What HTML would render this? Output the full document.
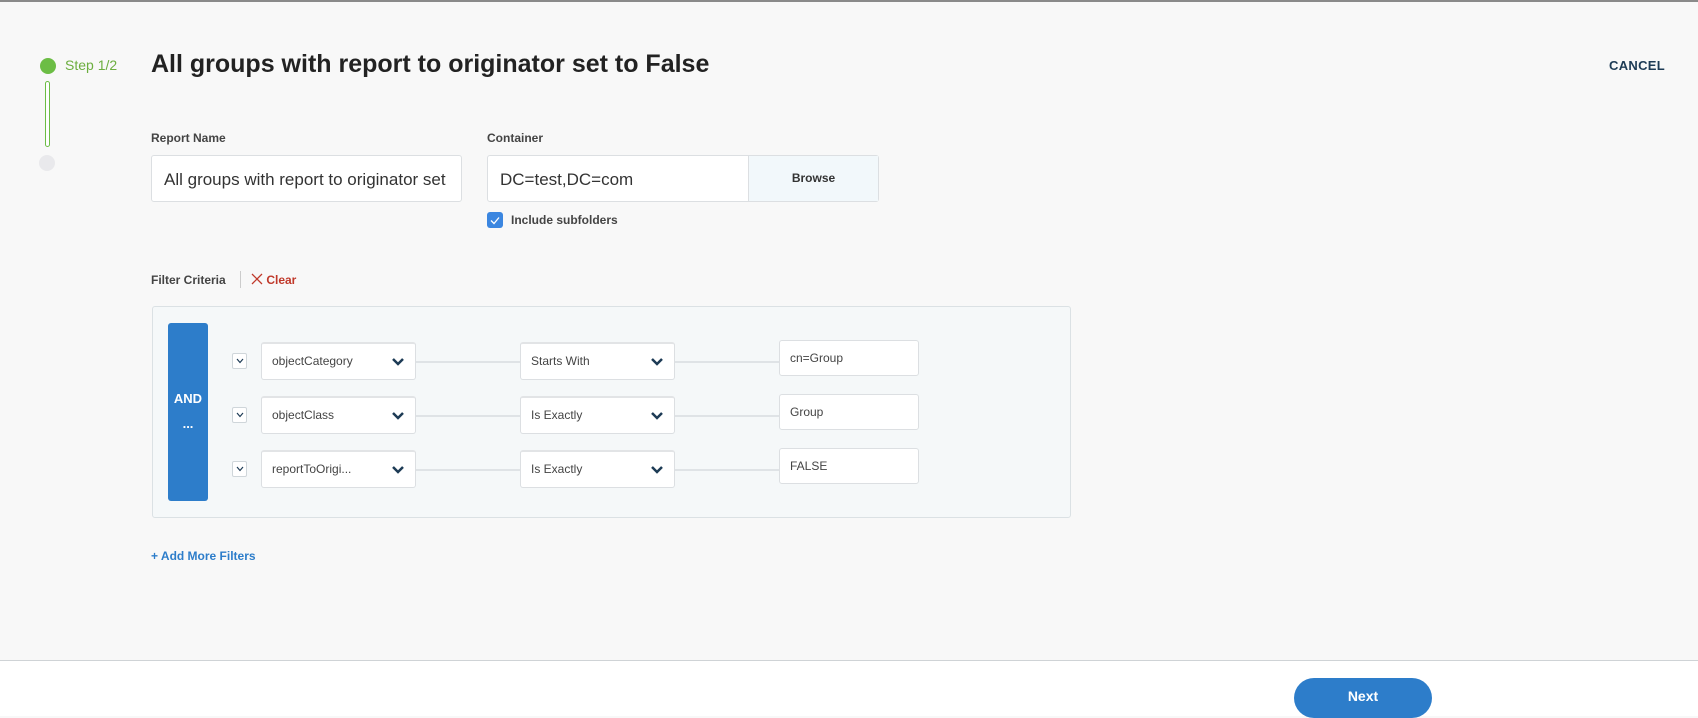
<!DOCTYPE html>
<html><head><style>
*{box-sizing:border-box;margin:0;padding:0}
body{width:1698px;height:716px;overflow:hidden;background:#f8f8f8;font-family:"Liberation Sans",sans-serif;position:relative;color:#333}
.a{position:absolute}
.lbl{font-size:12px;font-weight:bold;color:#444}
.inp{background:#fff;border:1px solid #dcdfe2;border-radius:3px}
.sel{background:#fff;border:1px solid #dcdfe2;border-top:2px solid #e2e4e6;border-radius:3px;height:38px;font-size:12px;color:#444;padding:0 0 0 10px;line-height:35px}
.sel svg{position:absolute;right:10px;top:13px}
.val{background:#fff;border:1px solid #dcdfe2;border-radius:3px;height:36px;font-size:12px;color:#444;padding-left:10px;line-height:34px}
.cb{width:15px;height:16px;border:1px solid #cfd6da;border-radius:2px;background:#fff}
.cb svg{position:absolute;left:3px;top:4px}
.ln{height:2px;background:#dfe3e6}
</style></head><body>
<div class="a" style="left:0;top:0;width:1698px;height:2px;background:#8a8a8a"></div>
<div class="a" style="left:40px;top:58px;width:16px;height:16px;border-radius:50%;background:#6cbd45"></div>
<div class="a" style="left:65px;top:57px;font-size:14px;color:#6cae3f">Step 1/2</div>
<div class="a" style="left:45px;top:81px;width:5px;height:66px;border:1px solid #6cbd45;border-radius:3px;background:#fff"></div>
<div class="a" style="left:39px;top:155px;width:16px;height:16px;border-radius:50%;background:#e9e9ec"></div>
<div class="a" style="left:151px;top:50px;font-size:25px;font-weight:bold;color:#222">All groups with report to originator set to False</div>
<div class="a" style="left:1609px;top:58px;font-size:13px;font-weight:bold;color:#1d3b55;letter-spacing:.3px">CANCEL</div>
<div class="a lbl" style="left:151px;top:131px">Report Name</div>
<div class="a inp" style="left:151px;top:155px;width:311px;height:47px;font-size:17px;color:#333;padding:14px 0 0 12px;white-space:nowrap;overflow:hidden">All groups with report to originator set</div>
<div class="a lbl" style="left:487px;top:131px">Container</div>
<div class="a inp" style="left:487px;top:155px;width:392px;height:47px;font-size:17px;color:#333;padding:14px 0 0 12px">DC=test,DC=com</div>
<div class="a" style="left:748px;top:156px;width:130px;height:45px;background:#f2f8fb;border-left:1px solid #dcdfe2;font-size:12px;font-weight:bold;color:#333;text-align:center;line-height:45px">Browse</div>
<div class="a" style="left:487px;top:212px;width:16px;height:16px;border-radius:3px;background:#3b86e0"><svg width="16" height="16"><path d="M4 8.5l3 3 5-6" stroke="#fff" stroke-width="1.3" fill="none"/></svg></div>
<div class="a lbl" style="left:511px;top:213px">Include subfolders</div>
<div class="a lbl" style="left:151px;top:273px">Filter Criteria</div>
<div class="a" style="left:240px;top:271px;width:1px;height:17px;background:#ccc"></div>
<div class="a" style="left:251px;top:273px;font-size:12px;font-weight:bold;color:#c0392b"><svg width="12" height="12" style="vertical-align:-1px"><path d="M1 1l10 10M11 1L1 11" stroke="#c0392b" stroke-width="1.3"/></svg> Clear</div>
<div class="a" style="left:152px;top:306px;width:919px;height:212px;background:#f5f8f9;border:1px solid #dbe1e4;border-radius:3px"></div>
<div class="a" style="left:168px;top:323px;width:40px;height:178px;background:#2d7dca;border-radius:3px;color:#fff;font-weight:bold;font-size:13px;text-align:center"><div style="margin-top:68px">AND</div><div style="margin-top:10px">...</div></div>

<div class="a cb" style="left:232px;top:353px"><svg width="8" height="6"><path d="M1 1l3 3.5 3-3.5" stroke="#1d3b55" stroke-width="1.2" fill="none"/></svg></div>
<div class="a cb" style="left:232px;top:407px"><svg width="8" height="6"><path d="M1 1l3 3.5 3-3.5" stroke="#1d3b55" stroke-width="1.2" fill="none"/></svg></div>
<div class="a cb" style="left:232px;top:461px"><svg width="8" height="6"><path d="M1 1l3 3.5 3-3.5" stroke="#1d3b55" stroke-width="1.2" fill="none"/></svg></div>

<div class="a ln" style="left:416px;top:361px;width:363px"></div>
<div class="a ln" style="left:416px;top:415px;width:363px"></div>
<div class="a ln" style="left:416px;top:469px;width:363px"></div>

<div class="a sel" style="left:261px;top:342px;width:155px">objectCategory<svg width="14" height="10"><path d="M2 2l5 5 5-5" stroke="#1d3b55" stroke-width="2.5" fill="none"/></svg></div>
<div class="a sel" style="left:261px;top:396px;width:155px">objectClass<svg width="14" height="10"><path d="M2 2l5 5 5-5" stroke="#1d3b55" stroke-width="2.5" fill="none"/></svg></div>
<div class="a sel" style="left:261px;top:450px;width:155px">reportToOrigi...<svg width="14" height="10"><path d="M2 2l5 5 5-5" stroke="#1d3b55" stroke-width="2.5" fill="none"/></svg></div>
<div class="a sel" style="left:520px;top:342px;width:155px">Starts With<svg width="14" height="10"><path d="M2 2l5 5 5-5" stroke="#1d3b55" stroke-width="2.5" fill="none"/></svg></div>
<div class="a sel" style="left:520px;top:396px;width:155px">Is Exactly<svg width="14" height="10"><path d="M2 2l5 5 5-5" stroke="#1d3b55" stroke-width="2.5" fill="none"/></svg></div>
<div class="a sel" style="left:520px;top:450px;width:155px">Is Exactly<svg width="14" height="10"><path d="M2 2l5 5 5-5" stroke="#1d3b55" stroke-width="2.5" fill="none"/></svg></div>
<div class="a val" style="left:779px;top:340px;width:140px">cn=Group</div>
<div class="a val" style="left:779px;top:394px;width:140px">Group</div>
<div class="a val" style="left:779px;top:448px;width:140px">FALSE</div>

<div class="a" style="left:151px;top:549px;font-size:12px;font-weight:bold;color:#2d7dca">+ Add More Filters</div>
<div class="a" style="left:0;top:660px;width:1698px;height:56px;background:#fff;border-top:1px solid #cfd3d6"></div>
<div class="a" style="left:1294px;top:678px;width:138px;height:40px;border-radius:20px;background:#2d7dca;color:#fff;font-weight:bold;font-size:14px;text-align:center;line-height:37px">Next</div>
</body></html>
